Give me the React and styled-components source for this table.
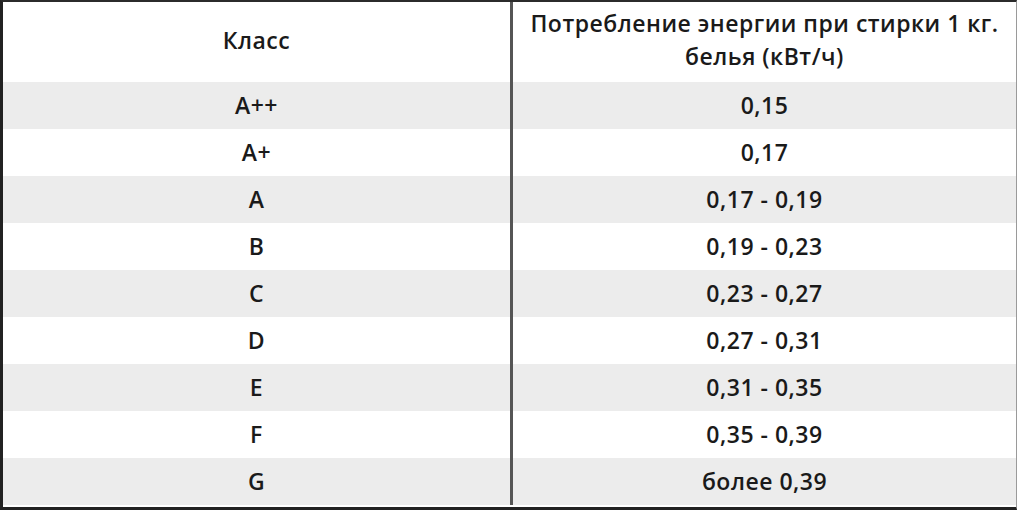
import React from "react";
import styled, { createGlobalStyle } from "styled-components";

const GlobalStyle = createGlobalStyle`
  html, body {
    margin: 0;
    padding: 0;
    background: #ffffff;
  }
  body {
    font-family: "Open Sans", "DejaVu Sans", sans-serif;
    color: #1a1a1a;
  }
`;

const Frame = styled.div`
  width: 1024px;
  height: 510px;
  box-sizing: border-box;
  padding-right: 7px;
  background: #ffffff;
`;

const Table = styled.div`
  display: flex;
  flex-direction: column;
  box-sizing: border-box;
  height: 510px;
  border-left: 3px solid #222;
  border-top: 2px solid #2b2b2b;
  border-bottom: 3px solid #222;
  border-right: 1px solid #9a9a9a;
`;

const Row = styled.div`
  display: grid;
  grid-template-columns: 507px 1fr;
  height: ${({ $head }) => ($head ? "80px" : "47px")};
  background: ${({ $shade }) => ($shade ? "#ececec" : "#ffffff")};
`;

const Cell = styled.div`
  display: flex;
  align-items: center;
  justify-content: center;
  text-align: center;
  font-size: 23px;
  font-weight: 600;
  letter-spacing: 0.5px;
  line-height: 33px;
  padding-bottom: ${({ $head }) => ($head ? "4px" : "0")};
`;

const ValueCell = styled(Cell)`
  border-left: 3px solid #555;
`;

const rows = [
  ["A++", "0,15"],
  ["A+", "0,17"],
  ["A", "0,17 - 0,19"],
  ["B", "0,19 - 0,23"],
  ["C", "0,23 - 0,27"],
  ["D", "0,27 - 0,31"],
  ["E", "0,31 - 0,35"],
  ["F", "0,35 - 0,39"],
  ["G", "более 0,39"],
];

export default function App() {
  return (
    <>
      <GlobalStyle />
      <Frame>
        <Table>
          <Row $head>
            <Cell $head>Класс</Cell>
            <ValueCell $head>
              Потребление энергии при стирки 1 кг.
              <br />
              белья (кВт/ч)
            </ValueCell>
          </Row>
          {rows.map(([cls, value], i) => (
            <Row key={cls} $shade={i % 2 === 0}>
              <Cell>{cls}</Cell>
              <ValueCell>{value}</ValueCell>
            </Row>
          ))}
        </Table>
      </Frame>
    </>
  );
}
